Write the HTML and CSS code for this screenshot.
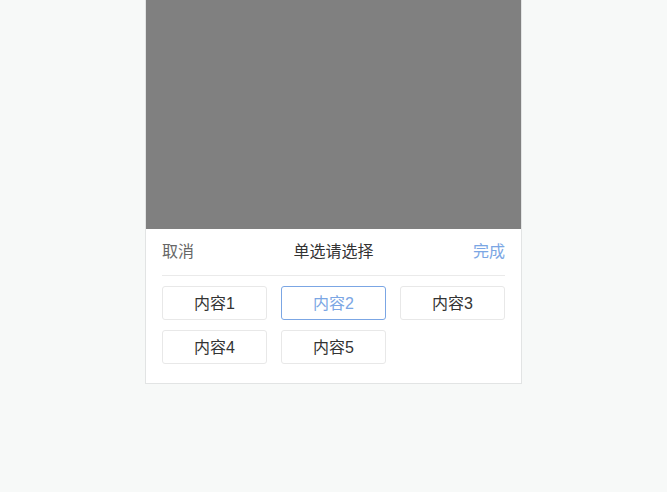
FILE: index.html
```html
<!DOCTYPE html>
<html lang="zh-CN">
<head>
    <meta charset="UTF-8">
    <meta name="viewport" content="width=device-width, initial-scale=1.0">
    <title>单选请选择</title>
    <link rel="stylesheet" href="styles.css">
</head>
<body>
    <div class="phone">
        <div class="mask"></div>
        <div class="picker">
            <div class="picker-header">
                <span class="picker-cancel">取消</span>
                <span class="picker-title">单选请选择</span>
                <span class="picker-done">完成</span>
            </div>
            <div class="picker-options">
                <div class="option">内容1</div>
                <div class="option active">内容2</div>
                <div class="option">内容3</div>
                <div class="option">内容4</div>
                <div class="option">内容5</div>
            </div>
        </div>
    </div>
</body>
</html>
```

FILE: styles.css
```css
:root {
    --primary-color: #7ba6e4;
    --border-color: #e8e8e8;
}

* {
    margin: 0;
    padding: 0;
    box-sizing: border-box;
}

body {
    font-family: "Liberation Sans", "Noto Sans CJK SC", sans-serif;
    background: #f7f9f8;
    color: #333;
}

.phone {
    width: 377px;
    margin: 0 auto;
    border: 1px solid #e2e4e4;
    border-top: none;
    background: #fff;
}

.mask {
    height: 229px;
    background: #808080;
}

.picker {
    padding: 0 16px 19px;
}

.picker-header {
    height: 47px;
    display: flex;
    align-items: center;
    justify-content: space-between;
    font-size: 16px;
    line-height: 1;
    border-bottom: 1px solid #eaeaea;
}

.picker-cancel {
    color: #666;
}

.picker-title {
    color: #333;
}

.picker-done {
    color: var(--primary-color);
}

.picker-options {
    display: grid;
    grid-template-columns: repeat(3, 105px);
    column-gap: 14px;
    row-gap: 10px;
    margin-top: 10px;
}

.option {
    height: 34px;
    padding-top: 2px;
    display: flex;
    align-items: center;
    justify-content: center;
    font-size: 16px;
    line-height: 1;
    color: #333;
    border: 1px solid var(--border-color);
    border-radius: 3px;
}

.option.active {
    color: var(--primary-color);
    border-color: var(--primary-color);
}
```
